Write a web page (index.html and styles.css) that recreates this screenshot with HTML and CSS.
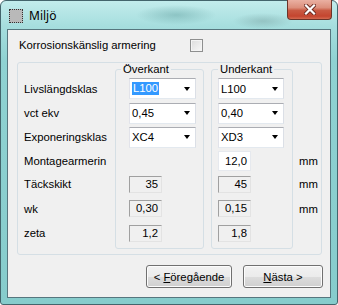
FILE: index.html
```html
<!DOCTYPE html>
<html lang="sv">
<head>
  <meta charset="UTF-8" />
  <title>Miljö</title>
  <link rel="stylesheet" href="styles.css">
</head>
<body>
  <div class="window">
    <div class="titlebar">
      <span class="app-icon"></span>
      <span class="title">Miljö</span>
      <span class="close-btn">
        <svg width="12" height="11" viewBox="0 0 12 11">
          <path d="M2 1.5 L10 9.5 M10 1.5 L2 9.5" stroke="#6b2a20" stroke-width="4" stroke-linecap="square"/>
          <path d="M2 1.5 L10 9.5 M10 1.5 L2 9.5" stroke="#fff" stroke-width="2.2" stroke-linecap="square"/>
        </svg>
      </span>
    </div>

    <div class="client">
      <div class="check-row">
        <label class="check-label" for="korr">Korrosionskänslig armering</label>
        <span class="checkbox" id="korr"></span>
      </div>

      <div class="group">
        <div class="col labels">
          <div class="row r1">Livslängdsklas</div>
          <div class="row r2">vct ekv</div>
          <div class="row r3">Exponeringsklas</div>
          <div class="row r4">Montagearmerin</div>
          <div class="row r5">Täckskikt</div>
          <div class="row r6">wk</div>
          <div class="row r7">zeta</div>
        </div>

        <fieldset class="sub over">
          <legend>Överkant</legend>
          <div class="row r1"><div class="combo"><span class="sel">L100</span><span class="arrow"></span></div></div>
          <div class="row r2"><div class="combo"><span>0,45</span><span class="arrow"></span></div></div>
          <div class="row r3"><div class="combo"><span>XC4</span><span class="arrow"></span></div></div>
          <div class="row r4"></div>
          <div class="row r5"><div class="readonly">35</div></div>
          <div class="row r6"><div class="readonly">0,30</div></div>
          <div class="row r7"><div class="readonly">1,2</div></div>
        </fieldset>

        <fieldset class="sub under">
          <legend>Underkant</legend>
          <div class="row r1"><div class="combo"><span>L100</span><span class="arrow"></span></div></div>
          <div class="row r2"><div class="combo"><span>0,40</span><span class="arrow"></span></div></div>
          <div class="row r3"><div class="combo"><span>XD3</span><span class="arrow"></span></div></div>
          <div class="row r4"><div class="textbox">12,0</div></div>
          <div class="row r5"><div class="readonly">45</div></div>
          <div class="row r6"><div class="readonly">0,15</div></div>
          <div class="row r7"><div class="readonly">1,8</div></div>
        </fieldset>

        <div class="col units">
          <div class="row r1"></div>
          <div class="row r2"></div>
          <div class="row r3"></div>
          <div class="row r4">mm</div>
          <div class="row r5">mm</div>
          <div class="row r6">mm</div>
          <div class="row r7"></div>
        </div>
      </div>

      <div class="buttons">
        <button class="btn prev">&lt; <u>F</u>öregående</button>
        <button class="btn next"><u>N</u>ästa &gt;</button>
      </div>
    </div>
  </div>
</body>
</html>
```

FILE: styles.css
```css
body {
  margin: 0;
  font-family: "Liberation Sans", Arial, sans-serif;
  font-size: 11.3px;
  color: #000;
  background: #fff;
}

.window {
  box-sizing: border-box;
  width: 338px;
  height: 305px;
  border: 1px solid #43656c;
  border-radius: 6px 6px 3px 3px;
  background:
    radial-gradient(ellipse 40px 10px at 175px 14px, rgba(110, 170, 170, 0.55), transparent),
    radial-gradient(ellipse 30px 8px at 262px 20px, rgba(120, 160, 160, 0.45), transparent),
    linear-gradient(#c2ecec, #a6dede 25px, #8fd2d2 60px, #86cccc);
  display: flex;
  flex-direction: column;
}

.titlebar {
  height: 28px;
  display: flex;
  align-items: center;
}

.app-icon {
  width: 12px;
  height: 12px;
  margin: 2px 0 0 8px;
  background: #b9b9b9;
  border: 1px dotted #333;
}

.title {
  margin: 1px 0 0 6px;
  font-family: "Noto Sans", "Open Sans", sans-serif;
  font-size: 12px;
}

.close-btn {
  margin-left: auto;
  margin-right: 5px;
  align-self: flex-start;
  margin-top: -1px;
  width: 45px;
  height: 20px;
  box-sizing: border-box;
  border: 1px solid #6b3429;
  border-top: none;
  border-radius: 0 0 4px 4px;
  background: linear-gradient(#eab0a2, #dc8f7c 40%, #c95a43 55%, #c4452f 85%, #d46a50);
  display: flex;
  align-items: center;
  justify-content: center;
}

.client {
  flex: 1;
  margin: 0 6px 6px 6px;
  border: 1px solid #56767e;
  background: #f0f0f0;
  padding: 4px 0 0 9px;
  display: flex;
  flex-direction: column;
}

.check-row {
  display: flex;
  align-items: center;
  height: 22px;
}

.check-label {
  width: 171px;
  padding-left: 2px;
}

.checkbox {
  width: 11px;
  height: 11px;
  border: 1px solid #8e8f8f;
  background: linear-gradient(135deg, #dcdcdc, #f8f8f8);
  box-shadow: inset 0 0 0 1px #f4f4f4;
}

.group {
  margin-top: 6px;
  width: 305px;
  box-sizing: border-box;
  border: 1px solid #d5dfe5;
  border-radius: 3px;
  padding-bottom: 5px;
  display: flex;
  align-items: flex-start;
}

.col {
  padding-top: 13px;
}

.labels {
  width: 97px;
  box-sizing: border-box;
  padding-left: 6px;
}

.units {
  width: 28px;
  box-sizing: border-box;
  padding-left: 6px;
}

.row {
  display: flex;
  align-items: center;
}

.r1 { height: 25px; }
.r2 { height: 24px; }
.r3 { height: 24px; }
.r4 { height: 23px; }
.r5 { height: 24px; }
.r6 { height: 25px; }
.r7 { height: 24px; }

.sub {
  margin: 0;
  box-sizing: border-box;
  border: 1px solid #d5dfe5;
  border-radius: 3px;
  min-width: 0;
}

.sub legend {
  padding: 0 2px;
  line-height: 13px;
}

.over {
  width: 89px;
  padding: 0 7px 3px 13px;
}

.over legend {
  margin-left: -8px;
}

.under {
  width: 82px;
  margin-left: 7px;
  padding: 0 8px 3px 6px;
}

.combo {
  box-sizing: border-box;
  width: 100%;
  height: 21px;
  border: 1px solid #abadb3;
  border-color: #abadb3 #dbdfe6 #e3e9ef #e2e3ea;
  background: #fff;
  display: flex;
  align-items: center;
  padding-left: 2px;
}

.sel {
  background: #3399ff;
  color: #fff;
  padding: 0 1px;
  line-height: 13px;
}

.arrow {
  margin-left: auto;
  margin-right: 5px;
  width: 0;
  height: 0;
  border-left: 3.5px solid transparent;
  border-right: 3.5px solid transparent;
  border-top: 4px solid #000;
}

.readonly,
.textbox {
  box-sizing: border-box;
  width: 33px;
  text-align: right;
  padding-right: 3px;
}

.readonly {
  height: 17px;
  line-height: 15px;
  border: 1px solid #a0a0a0;
  border-right-color: #e3e3e3;
  border-bottom-color: #e3e3e3;
  background: #f0f0f0;
}

.textbox {
  height: 20px;
  line-height: 18px;
  border: 1px solid #e6e9ee;
  background: #fff;
}

.buttons {
  margin-top: 10px;
  padding-right: 7px;
  display: flex;
  justify-content: flex-end;
  gap: 11px;
}

.btn {
  box-sizing: border-box;
  height: 23px;
  padding: 0;
  font-family: inherit;
  font-size: inherit;
  color: #000;
  border: 1px solid #707070;
  border-radius: 3px;
  background: linear-gradient(#f2f2f2, #ebebeb 50%, #dddddd 50%, #cfcfcf);
  box-shadow: inset 0 0 0 1px #fcfcfc;
}

.prev { width: 86px; }
.next { width: 80px; }
```
